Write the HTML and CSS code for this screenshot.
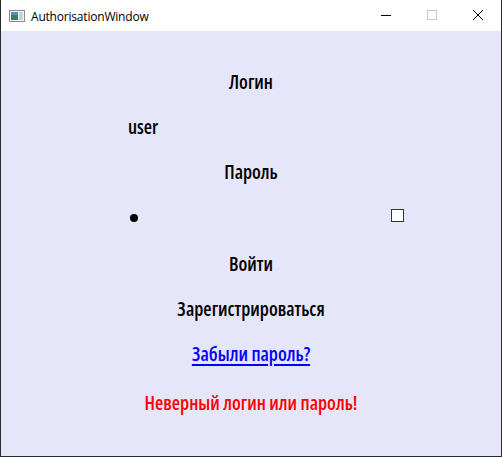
FILE: index.html
```html
<!DOCTYPE html>
<html lang="ru">
<head>
<meta charset="utf-8">
<title>AuthorisationWindow</title>
<link rel="stylesheet" href="styles.css">
</head>
<body>
<div class="window">
  <div class="titlebar">
    <svg class="app-icon" width="16" height="12" viewBox="0 0 16 12">
      <rect x="0.5" y="0.5" width="15" height="11" fill="#f4f4f4" stroke="#8c8c8c"/>
      <rect x="2" y="2" width="7" height="8" fill="#3c7a6e"/>
      <rect x="2" y="2" width="7" height="3" fill="#5c8fb0"/>
      <rect x="10" y="2" width="4" height="8" fill="#c9d3d8"/>
    </svg>
    <span class="title">AuthorisationWindow</span>
    <div class="controls">
      <div class="ctl"><svg width="10" height="10" viewBox="0 0 10 10"><line x1="0" y1="5.5" x2="10" y2="5.5" stroke="#000" stroke-width="1"/></svg></div>
      <div class="ctl"><svg width="10" height="10" viewBox="0 0 10 10"><rect x="0.5" y="0.5" width="9" height="9" fill="none" stroke="#c8c8c8" stroke-width="1"/></svg></div>
      <div class="ctl"><svg width="10" height="10" viewBox="0 0 10 10"><path d="M0 0 L10 10 M10 0 L0 10" stroke="#000" stroke-width="1"/></svg></div>
    </div>
  </div>
  <div class="content">
    <div class="row center">Логин</div>
    <div class="row panel"><span class="input-text">user</span></div>
    <div class="row center">Пароль</div>
    <div class="row panel pw">
      <span class="dot"></span>
      <span class="checkbox"></span>
    </div>
    <div class="row center gap-a">Войти</div>
    <div class="row center">Зарегистрироваться</div>
    <div class="row center"><a class="link" href="#">Забыли пароль?</a></div>
    <div class="row center gap-b error">Неверный логин или пароль!</div>
  </div>
</div>
</body>
</html>
```
FILE: styles.css
```css
html, body {
  margin: 0;
  padding: 0;
}
body {
  width: 502px;
  height: 457px;
  overflow: hidden;
}
.window {
  width: 502px;
  height: 457px;
  box-sizing: border-box;
  border: 1px solid #2b2b2b;
  border-top: none;
  display: flex;
  flex-direction: column;
  background: #fff;
}
.titlebar {
  height: 31px;
  flex: 0 0 31px;
  display: flex;
  align-items: center;
  background: #fff;
}
.app-icon {
  margin-left: 8px;
  margin-top: 1px;
  flex: none;
}
.title {
  margin-left: 6px;
  font-family: "Open Sans", "Noto Sans", sans-serif;
  font-size: 12px;
  letter-spacing: -0.2px;
  color: #000;
  margin-top: 1px;
}
.controls {
  margin-left: auto;
  display: flex;
  height: 100%;
}
.ctl {
  width: 46px;
  height: 100%;
  display: flex;
  align-items: center;
  justify-content: center;
}
.ctl svg {
  display: block;
  margin-top: -1px;
}
.content {
  flex: 1;
  background: #e6e6fa;
  padding-top: 28px;
  display: flex;
  flex-direction: column;
  font-family: "Open Sans", "Noto Sans", sans-serif;
  font-stretch: 75%;
  font-weight: 600;
  font-size: 19px;
  color: #000;
}
.row {
  height: 45px;
  flex: none;
  display: flex;
  align-items: center;
  white-space: nowrap;
}
.center {
  justify-content: center;
}
.panel {
  margin-left: 127px;
  width: 276px;
}
.input-text {
  margin-left: 0;
}
.pw {
  justify-content: space-between;
}
.dot {
  width: 8px;
  height: 8px;
  border-radius: 50%;
  background: #000;
  margin-left: 2px;
  margin-top: 3px;
}
.checkbox {
  width: 11px;
  height: 11px;
  border: 1px solid #333;
  background: #fff;
  margin-top: -2px;
}
.gap-a {
  margin-top: 2px;
}
.gap-b {
  margin-top: 4px;
}
.link {
  color: #0000ff;
  text-decoration: underline;
  text-decoration-thickness: 1.5px;
  text-underline-offset: 3px;
}
.error {
  color: #ff0000;
}
```
